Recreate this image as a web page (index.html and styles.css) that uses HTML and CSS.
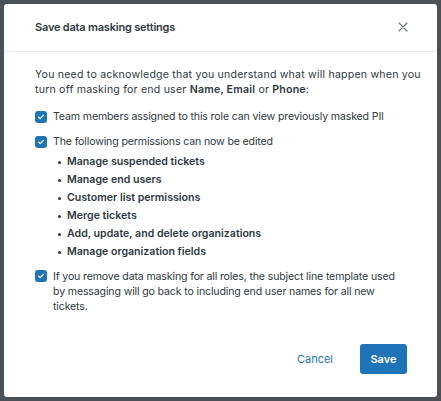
FILE: index.html
```html
<!DOCTYPE html>
<html>
<head>
<meta charset="utf-8">
<link rel="stylesheet" href="styles.css">
</head>
<body>
<div class="modal">
  <header class="modal-header">
    <h1 class="title">Save data masking settings</h1>
    <button class="close" aria-label="Close">
      <svg width="10" height="10" viewBox="0 0 10 10"><path d="M1 1L9 9M9 1L1 9" stroke="#68737d" stroke-width="1.1" stroke-linecap="round"/></svg>
    </button>
  </header>
  <div class="modal-body">
    <p class="intro">You need to acknowledge that you understand what will happen when you<br>turn off masking for end user <b>Name, Email</b> or <b>Phone</b>:</p>
    <label class="check-row">
      <span class="box"><svg width="8" height="8" viewBox="0 0 8 8"><path d="M1.6 4.1L3.2 5.6L6.4 2.4" fill="none" stroke="#fff" stroke-width="1.3" stroke-linecap="round" stroke-linejoin="round"/></svg></span>
      <span class="label">Team members assigned to this role can view previously masked PII</span>
    </label>
    <label class="check-row row2">
      <span class="box"><svg width="8" height="8" viewBox="0 0 8 8"><path d="M1.6 4.1L3.2 5.6L6.4 2.4" fill="none" stroke="#fff" stroke-width="1.3" stroke-linecap="round" stroke-linejoin="round"/></svg></span>
      <span class="label">The following permissions can now be edited</span>
    </label>
    <ul class="perms">
      <li>Manage suspended tickets</li>
      <li>Manage end users</li>
      <li>Customer list permissions</li>
      <li>Merge tickets</li>
      <li>Add, update, and delete organizations</li>
      <li>Manage organization fields</li>
    </ul>
    <label class="check-row row3">
      <span class="box"><svg width="8" height="8" viewBox="0 0 8 8"><path d="M1.6 4.1L3.2 5.6L6.4 2.4" fill="none" stroke="#fff" stroke-width="1.3" stroke-linecap="round" stroke-linejoin="round"/></svg></span>
      <span class="label">If you remove data masking for all roles, the subject line template used by messaging will go back to including end user names for all new tickets.</span>
    </label>
  </div>
  <footer class="modal-footer">
    <button class="btn-cancel">Cancel</button>
    <button class="btn-save">Save</button>
  </footer>
</div>
</body>
</html>
```
FILE: styles.css
```css
html, body {
  margin: 0;
  padding: 0;
  background: #4b5157;
  height: 401px;
  overflow: hidden;
}
body {
  font-family: Inter, "Liberation Sans", Arial, sans-serif;
  color: #2f3941;
  padding: 4px 4px 0 4px;
}
.modal {
  width: 433px;
  height: 393px;
  background: #fff;
  border-radius: 3px;
  display: flex;
  flex-direction: column;
  box-sizing: border-box;
}
.modal-header {
  height: 48px;
  box-sizing: border-box;
  border-bottom: 1px solid #e9ebed;
  display: flex;
  align-items: center;
  justify-content: space-between;
  padding: 0 28px 1px 31px;
}
.title {
  margin: 0;
  font-size: 11px;
  font-weight: 600;
  letter-spacing: -0.2px;
  color: #2f3941;
}
.close {
  border: 0;
  background: none;
  padding: 0;
  width: 12px;
  height: 12px;
  display: flex;
  align-items: center;
  justify-content: center;
}
.modal-body {
  padding: 15px 31px 0 31px;
  font-size: 10.6px;
  line-height: 15px;
}
.intro {
  margin: 0 0 12px 0;
  letter-spacing: 0.2px;
  white-space: nowrap;
}
.intro b {
  font-weight: 600;
}
.check-row {
  display: flex;
  align-items: flex-start;
  gap: 6px;
}
.row2 {
  margin-top: 10px;
}
.row3 {
  margin-top: 8px;
}
.box {
  flex: none;
  width: 12px;
  height: 12px;
  margin-top: 1.5px;
  border-radius: 3px;
  background: #1f73b7;
  display: flex;
  align-items: center;
  justify-content: center;
}
.label {
  line-height: 15.3px;
  letter-spacing: -0.15px;
}
.perms {
  margin: 3px 0 0 0;
  padding: 0 0 0 32px;
  font-weight: 600;
  line-height: 18px;
  list-style: none;
}
.perms li {
  position: relative;
}
.perms li::before {
  content: "";
  position: absolute;
  left: -9px;
  top: 8px;
  width: 3px;
  height: 3px;
  border-radius: 50%;
  background: #2f3941;
}
.modal-footer {
  margin-top: auto;
  display: flex;
  justify-content: flex-end;
  align-items: center;
  gap: 27px;
  padding: 0 30px 23px 0;
}
.btn-cancel {
  border: 0;
  background: none;
  font-family: inherit;
  font-size: 11px;
  color: #1f73b7;
  padding: 0;
}
.btn-save {
  border: 0;
  width: 47px;
  height: 30px;
  border-radius: 3px;
  background: #1f73b7;
  color: #fff;
  font-family: inherit;
  font-weight: 600;
  font-size: 11px;
  padding: 0;
}
```
